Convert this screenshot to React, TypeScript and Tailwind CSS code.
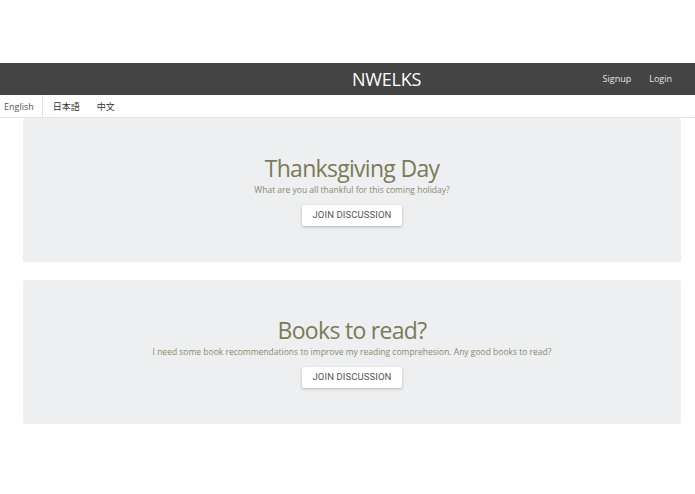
import React from "react";

const TOPICS = [
  {
    title: "Thanksgiving Day",
    body: "What are you all thankful for this coming holiday?",
  },
  {
    title: "Books to read?",
    body: "I need some book recommendations to improve my reading comprehesion. Any good books to read?",
  },
];

export default function App() {
  return (
    <div className="w-[695px] h-[494px] bg-white font-['Open_Sans',sans-serif] overflow-hidden">
      <div className="h-[63px]" />
      {/* Navbar */}
      <div className="relative h-[32px] bg-[#444444] flex items-center">
        <div className="flex-1 pl-[352px] text-white text-[18px] leading-none tracking-[-0.2px]">
          NWELKS
        </div>
        <div className="flex items-center gap-[18px] pr-[23px] text-[9px] text-[#e6e6e6]">
          <span>Signup</span>
          <span>Login</span>
        </div>
      </div>
      {/* Language tabs */}
      <div className="flex h-[23px] items-stretch border-b border-[#e3e3e3] text-[9px] text-[#333]">
        <div className="flex items-center pt-[2px] pl-[4px] pr-[8px] border-r border-[#e3e3e3] text-[#555]">
          English
        </div>
        <div className="flex items-center pt-[2px] pl-[10px] pr-[17px] font-['Noto_Sans_CJK_JP',sans-serif]">日本語</div>
        <div className="flex items-center pt-[2px] font-['Noto_Sans_CJK_SC',sans-serif]">中文</div>
      </div>
      {/* Topics */}
      <div className="flex flex-col gap-[18px] pl-[23px]">
        {TOPICS.map((t) => (
          <div
            key={t.title}
            className="w-[658px] h-[144px] bg-[#eeeff1] rounded-[2px] flex flex-col items-center pt-[36px]"
          >
            <h2 className="text-[23px] leading-[28px] tracking-[-0.7px] text-[#7b7b57]">{t.title}</h2>
            <p className="mt-[2px] text-[8.5px] leading-[12px] text-[#8a8a6a]">{t.body}</p>
            <button className="mt-[9px] h-[21px] px-[11px] bg-white rounded-[2px] shadow-[0_1px_3px_rgba(0,0,0,0.25)] font-['Roboto',sans-serif] text-[9.5px] tracking-[0.1px] text-[#555]">
              JOIN DISCUSSION
            </button>
          </div>
        ))}
      </div>
    </div>
  );
}
